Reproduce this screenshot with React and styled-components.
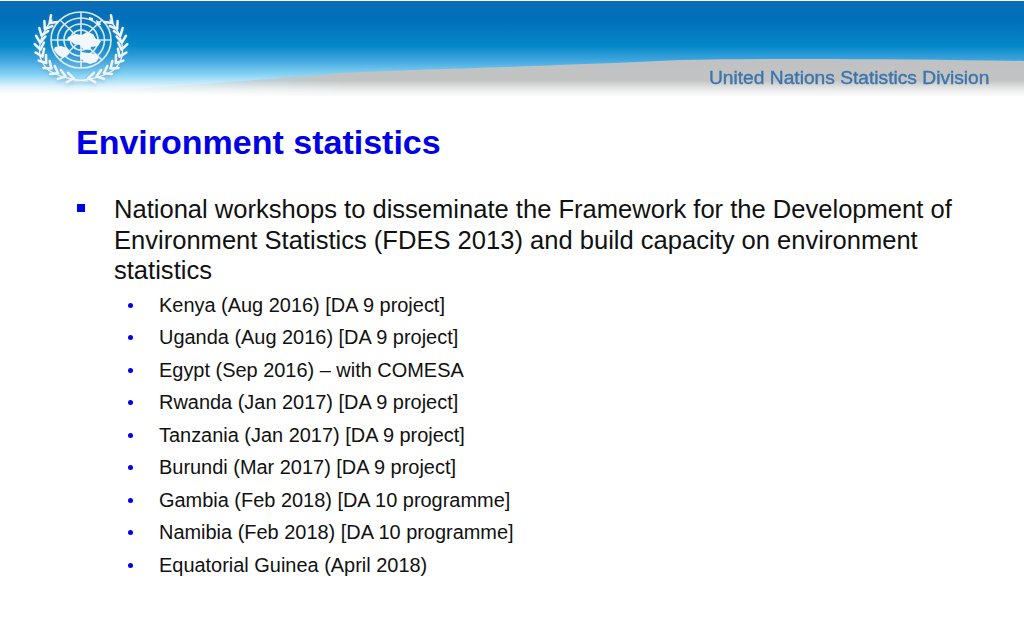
import React from "react";
import styled, { createGlobalStyle } from "styled-components";

const Global = createGlobalStyle`
  html, body { margin: 0; padding: 0; background: #fff; }
  body { width: 1024px; height: 640px; overflow: hidden; font-family: "Liberation Sans", Arial, sans-serif; }
`;

const Slide = styled.div`
  width: 1024px;
  height: 640px;
  display: flex;
  flex-direction: column;
  background: #fff;
`;

const Banner = styled.header`
  position: relative;
  flex: none;
  height: 98px;
  overflow: hidden;
`;

const BannerArt = styled.svg`
  display: block;
  width: 1024px;
  height: 98px;
`;

const Division = styled.span`
  position: absolute;
  left: 709px;
  top: 67px;
  font-size: 19.2px;
  line-height: 22px;
  font-weight: 400;
  color: #3c74ac;
  -webkit-text-stroke: 0.4px #3c74ac;
  white-space: nowrap;
  filter: blur(0.4px);
`;

const Content = styled.main`
  display: flex;
  flex-direction: column;
  padding: 24px 0 0 76px;
`;

const Title = styled.h1`
  margin: 0 0 32px;
  font-size: 34px;
  line-height: 40px;
  font-weight: 700;
  color: #0000e6;
`;

const MainItem = styled.div`
  display: flex;
  width: 900px;
`;

const SquareCell = styled.div`
  flex: none;
  width: 38px;
  padding-top: 10px;
`;

const Square = styled.span`
  display: block;
  width: 8px;
  height: 8px;
  margin-left: 1px;
  background: #0000e6;
`;

const MainText = styled.p`
  margin: 0;
  width: 860px;
  font-size: 25.55px;
  line-height: 30.6px;
  color: #111;
`;

const SubList = styled.ul`
  list-style: none;
  margin: 3.3px 0 0 51.5px;
  padding: 0;
`;

const SubItem = styled.li`
  display: flex;
  align-items: center;
  height: 32.5px;
  font-size: 19.95px;
  color: #111;
`;

const Dot = styled.span`
  flex: none;
  width: 5px;
  height: 5px;
  margin-right: 26.5px;
  border-radius: 50%;
  background: #0000e6;
`;

const RX = 41;
const RY = 34;
const CX = 81;
const CY = 45;

const leafPath = () => {
  const parts = [];
  for (let i = 0; i < 11; i++) {
    const th = ((10 + i * 12) * Math.PI) / 180;
    const x = CX - RX * Math.sin(th);
    const y = CY + RY * Math.cos(th);
    const base = Math.atan2(-RY * Math.sin(th), -RX * Math.cos(th));
    [-0.62, 0.62].forEach((d) => {
      const a = base + d;
      const ex = x + 8 * Math.cos(a);
      const ey = y + 8 * Math.sin(a);
      parts.push(`M${x.toFixed(1)} ${y.toFixed(1)}L${ex.toFixed(1)} ${ey.toFixed(1)}`);
    });
  }
  return parts.join("");
};

const Wreath = () => (
  <g fill="none" stroke="#eef5fa" strokeLinecap="round">
    <path d={leafPath()} strokeWidth="2.5" />
    <path d="M88 81C70 80 48 74 44 65C37 56 37 38 52 20" strokeWidth="1.2" />
  </g>
);

const Emblem = () => (
  <g>
    <g fill="none" stroke="#e6f2f9" strokeWidth="1.6" opacity=".92">
      <ellipse cx="81" cy="40" rx="30" ry="28" />
      <ellipse cx="81" cy="40" rx="23.5" ry="22" />
      <ellipse cx="81" cy="40" rx="17" ry="16" />
      <ellipse cx="81" cy="40" rx="10.5" ry="10" />
      <path d="M81 12V68M51 40H111M60 20L102 60M102 20L60 60" />
    </g>
    <g fill="#f2f7fb" stroke="none">
      <path d="M68 37l8-3 6 1 5-3 6 2 3 5 5 2-3 5-7 1-1 3-7-1-3-4-6-1-3-3-4-1z" />
      <path d="M55 47l6-1 6 2 3 4-2 3-5 3-5-3-4-5z" />
      <path d="M81 52l7 1 8 1 3 4-3 4-6 2-5-2-5-4z" />
      <path d="M96 20l4 2 1 3-4 0zM89 17l4 1 0 2-4 0z" />
    </g>
    <Wreath />
    <g transform="matrix(-1 0 0 1 162 0)">
      <Wreath />
    </g>
  </g>
);

export default function App() {
  const places = [
    "Kenya (Aug 2016) [DA 9 project]",
    "Uganda (Aug 2016) [DA 9 project]",
    "Egypt (Sep 2016) – with COMESA",
    "Rwanda (Jan 2017) [DA 9 project]",
    "Tanzania (Jan 2017) [DA 9 project]",
    "Burundi (Mar 2017) [DA 9 project]",
    "Gambia (Feb 2018) [DA 10 programme]",
    "Namibia (Feb 2018) [DA 10 programme]",
    "Equatorial Guinea (April 2018)",
  ];
  return (
    <Slide>
      <Global />
      <Banner>
        <BannerArt viewBox="0 0 1024 98" aria-hidden="true">
          <defs>
            <linearGradient id="sky" x1="0" y1="0" x2="0" y2="1">
              <stop offset="0" stopColor="#0a6cb6" />
              <stop offset=".2" stopColor="#0070ba" />
              <stop offset=".46" stopColor="#0588c9" />
              <stop offset=".6" stopColor="#3ba3dc" />
              <stop offset=".76" stopColor="#86d3f4" />
              <stop offset=".88" stopColor="#dff3fa" />
              <stop offset=".96" stopColor="#ffffff" />
            </linearGradient>
            <linearGradient id="ground" x1="0" y1="60" x2="0" y2="97" gradientUnits="userSpaceOnUse">
              <stop offset="0" stopColor="#bfc1c2" />
              <stop offset=".55" stopColor="#c2c4c4" />
              <stop offset=".8" stopColor="#ebebeb" />
              <stop offset="1" stopColor="#ffffff" />
            </linearGradient>
            <linearGradient id="fade" x1="100" y1="0" x2="340" y2="0" gradientUnits="userSpaceOnUse">
              <stop offset="0" stopColor="#fff" stopOpacity="0" />
              <stop offset="1" stopColor="#fff" />
            </linearGradient>
            <mask id="fadeMask">
              <rect width="1024" height="98" fill="url(#fade)" />
            </mask>
            <filter id="soft"><feGaussianBlur stdDeviation="0.45" /></filter>
            <filter id="glow" x="-10%" y="-10%" width="120%" height="120%">
              <feGaussianBlur in="SourceGraphic" stdDeviation="0.45" result="b" />
              <feDropShadow in="b" dx="0" dy="2" stdDeviation="2" floodColor="#4d90c0" floodOpacity=".5" />
            </filter>
          </defs>
          <rect y="1" width="1024" height="97" fill="url(#sky)" />
          <path
            d="M90 92C200 85 290 77 340 73C420 69 560 66 680 60C780 58 900 59 1024 61V98H90Z"
            fill="url(#ground)"
            mask="url(#fadeMask)"
            filter="url(#soft)"
          />
          <g filter="url(#glow)">
            <Emblem />
          </g>
        </BannerArt>
        <Division>United Nations Statistics Division</Division>
      </Banner>
      <Content>
        <Title>Environment statistics</Title>
        <MainItem>
          <SquareCell><Square /></SquareCell>
          <MainText>
            National workshops to disseminate the Framework for the Development of
            <br />
            Environment Statistics (FDES 2013) and build capacity on environment
            <br />
            statistics
          </MainText>
        </MainItem>
        <SubList>
          {places.map((p) => (
            <SubItem key={p}><Dot />{p}</SubItem>
          ))}
        </SubList>
      </Content>
    </Slide>
  );
}
